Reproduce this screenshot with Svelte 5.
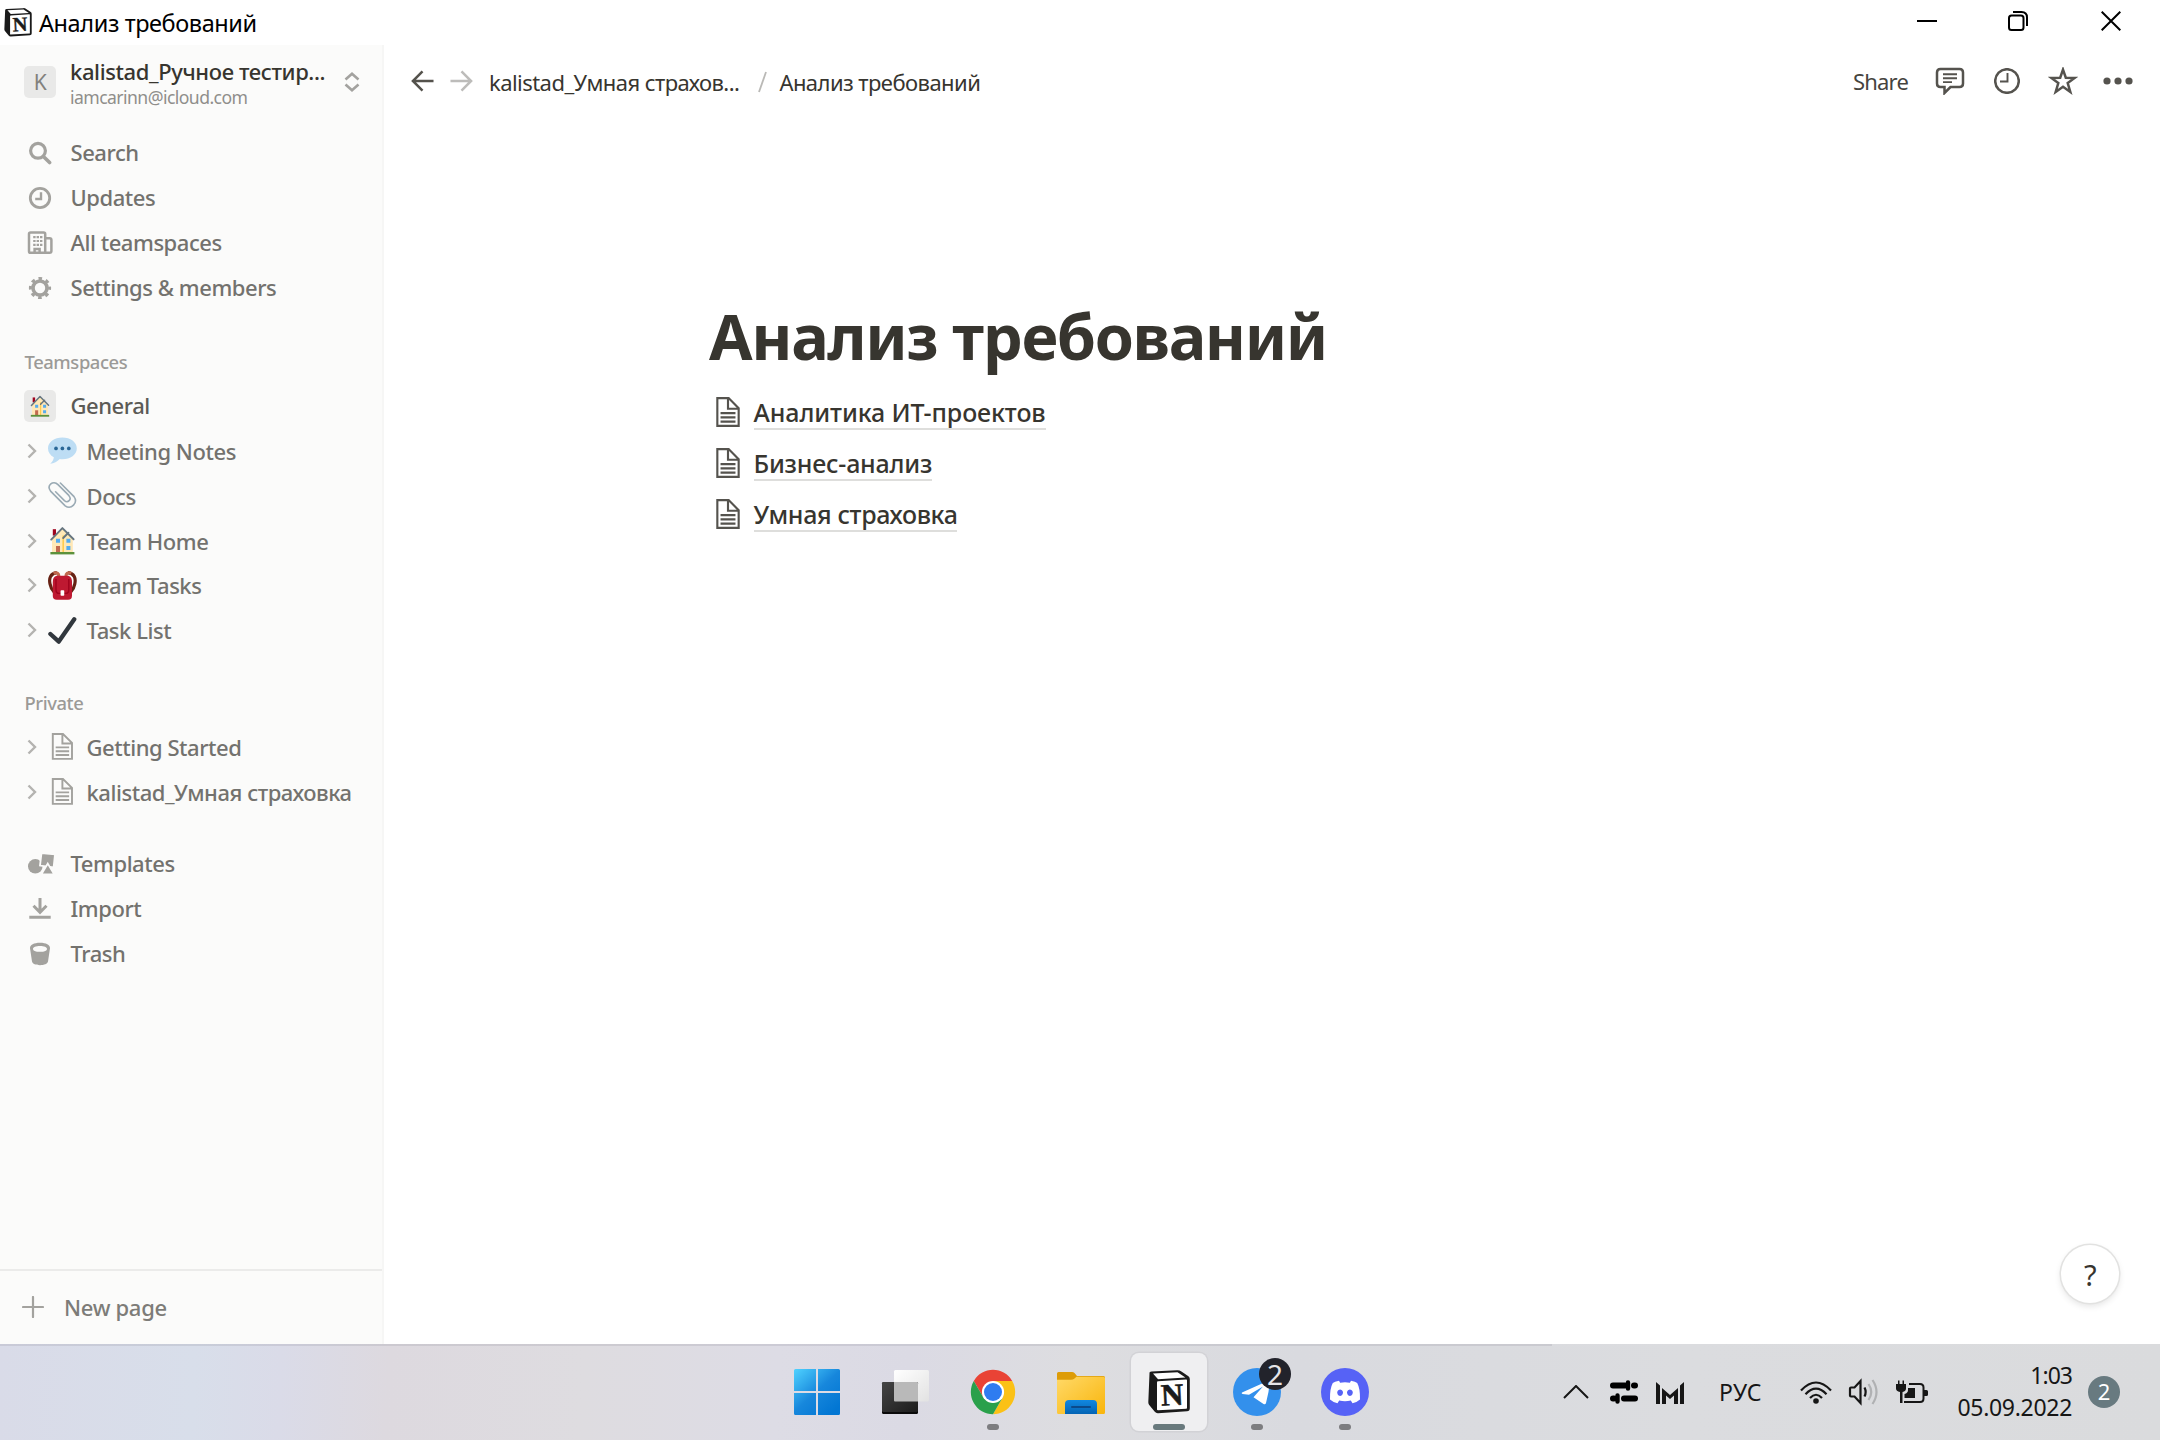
<script>
  const nav = [
    { icon: 'search', label: 'Search' },
    { icon: 'clock', label: 'Updates' },
    { icon: 'building', label: 'All teamspaces' },
    { icon: 'gear', label: 'Settings & members' }
  ];
  const teamPages = [
    { icon: 'bubble', label: 'Meeting Notes' },
    { icon: 'clip', label: 'Docs' },
    { icon: 'house', label: 'Team Home' },
    { icon: 'backpack', label: 'Team Tasks' },
    { icon: 'check', label: 'Task List' }
  ];
  const privatePages = [
    { icon: 'page', label: 'Getting Started' },
    { icon: 'page', label: 'kalistad_Умная страховка' }
  ];
  const tools = [
    { icon: 'templates', label: 'Templates' },
    { icon: 'import', label: 'Import' },
    { icon: 'trash', label: 'Trash' }
  ];
  const links = ['Аналитика ИТ-проектов', 'Бизнес-анализ', 'Умная страховка'];
  const apps = [
    { icon: 'windows' },
    { icon: 'taskview' },
    { icon: 'chrome', running: true },
    { icon: 'explorer' },
    { icon: 'notion', active: true },
    { icon: 'telegram', running: true, badge: '2' },
    { icon: 'discord', running: true }
  ];
</script>

{#snippet pageGlyph()}
  <svg class="page-glyph" viewBox="0 0 30 30"><path d="M16,1H4v28h22V11L16,1z M16,3.828L23.172,11H16V3.828z M24,27H6V3h8v10h10V27z M8,17h14v-2H8V17z M8,21h14v-2H8V21z M8,25h14v-2H8V25z" /></svg>
{/snippet}

{#snippet navIcon(name)}
  {#if name === 'search'}
    <svg class="nav-icon" viewBox="0 0 24 24"><g class="line"><circle cx="10" cy="9.8" r="7.4" stroke-width="3.2" /><path d="M15.4 15.4L21.6 21.6" stroke-width="3.6" stroke-linecap="round" /></g></svg>
  {:else if name === 'clock'}
    <svg class="nav-icon" viewBox="0 0 24 24"><g class="line"><circle cx="12" cy="12" r="9.7" stroke-width="2.8" /><path d="M13 6.2V13H7.2" stroke-width="2.4" /></g></svg>
  {:else if name === 'building'}
    <svg class="nav-icon wide" viewBox="0 0 26 24"><g class="line" stroke-width="2.5"><path d="M18.2 21.8H3.6Q2 21.8 2 20.2V3Q2 1.4 3.6 1.4H16.6Q18.2 1.4 18.2 3ZM18.2 7.2H22.6Q24.4 7.2 24.4 9V20Q24.4 21.8 22.6 21.8H18.2M7.6 21.8V18H12.6V21.8" /><path d="M6.2 6.2h2.4M9.6 6.2h2.4M13 6.2h2.4M6.2 10h2.4M9.6 10h2.4M13 10h2.4M6.2 13.8h2.4M9.6 13.8h2.4M13 13.8h2.4" stroke-width="2.2" /></g></svg>
  {:else if name === 'gear'}
    <svg class="nav-icon" viewBox="0 0 24 24"><g class="line"><circle cx="12" cy="12" r="7" stroke-width="3.6" /><circle cx="12" cy="12" r="9.600" stroke-width="3" stroke-dasharray="3.6 3.94" stroke-dashoffset="1.8" /></g></svg>
  {:else if name === 'templates'}
    <svg class="nav-icon xwide" viewBox="0 0 28 24"><circle cx="8.3" cy="14.3" r="7.3" /><path class="cut" d="M14.5 1L28 2.4 26.6 15.5 13 13.6Z" /><path class="cut" d="M20.8 11.6L27.2 22.4H14.4Z" /></svg>
  {:else if name === 'import'}
    <svg class="nav-icon" viewBox="0 0 24 24"><g class="line" stroke-width="3"><path d="M12 1V14.5M5.5 8.8L12 15.3 18.5 8.8M1.3 20.2H22.7" /></g></svg>
  {:else}
    <svg class="nav-icon" viewBox="0 0 24 24"><path fill-rule="evenodd" d="M12 .8C6 .8 1.8 3 2 6.2L4 19.6C4.4 22 8 23.2 12 23.2S19.6 22 20 19.6L22 6.2C22.2 3 18 .8 12 .8ZM12 4C16.2 4 19 5.2 19 6.9S16.2 9.8 12 9.8 5 8.6 5 6.9 7.8 4 12 4Z" /></svg>
  {/if}
{/snippet}

{#snippet house()}
  <svg class="emoji" viewBox="0 0 36 36">
    <path fill="#a0041e" d="M6 4h4v8H6z" />
    <path fill="#ffe8b6" d="M5 16L18 3l13 13v18H5z" />
    <path fill="#ffcc4d" d="M18 12h2v21h-2z" />
    <path fill="none" stroke="#66757f" stroke-width="2.4" stroke-linejoin="round" stroke-linecap="round" d="M4 17L18 2.6 32 16.6M19 15l6.5-6.5" />
    <path fill="#55acee" d="M10 16h5v5h-5zM23 16h5v5h-5zM23 25h5v5h-5z" />
    <path fill="#c1694f" d="M10 25h5v8h-5z" />
    <path fill="#5c913b" d="M3 32.5h30v3H3z" />
  </svg>
{/snippet}

{#snippet treeIcon(name)}
  {#if name === 'page'}
    {@render pageGlyph()}
  {:else if name === 'house'}
    {@render house()}
  {:else if name === 'bubble'}
    <svg class="emoji" viewBox="0 0 36 36"><path fill="#bdddf4" d="M18 2C8 2 0 7.8 0 15.5c0 4.600 2.900 8.600 7.300 11C7 29.500 5.500 32 2.800 34.800c4.700-.5 8.900-2.700 11.900-6.100 1.100.2 2.200.3 3.300.3 10 0 18-5.800 18-13.500S28 2 18 2z" /><g fill="#2a6797"><circle cx="10" cy="15.500" r="2.300" /><circle cx="18" cy="15.500" r="2.300" /><circle cx="26" cy="15.500" r="2.300" /></g></svg>
  {:else if name === 'clip'}
    <svg class="emoji" viewBox="0 0 36 36"><path fill="none" stroke="#9aaab4" stroke-width="2" stroke-linecap="round" d="M15.500 2.500L32.500 19.500C38 27 29 36.500 21.500 31L3.500 13C-2.500 5.500 6.500-1.500 12.500 4.500L26 18C30.500 23.500 24.500 28 20.500 24.500L9.500 13.500" /></svg>
  {:else if name === 'backpack'}
    <svg class="emoji" viewBox="0 0 36 36"><path fill="none" stroke="#662113" stroke-width="4" d="M11 2C3 3 1 9 2.500 16s3 8 5 10M25 2c8 1 10 7 8.500 14s-3 8-5 10" /><path fill="none" stroke="#c1694f" stroke-width="4" d="M7 3c4-2 7 0 6.500 5M29 3c-4-2-7 0-6.500 5" /><path fill="#be1931" d="M12 6h12c4 0 6 3 6 8v17c0 3-1.500 5-5 5H11c-3.500 0-5-2-5-5V14c0-5 2-8 6-8z" /><path fill="none" stroke="#a0041e" stroke-width="1.800" d="M10 10v13c0 4 2 5 4 5h8c2 0 4-1 4-5V10" /><rect fill="#fff" x="15.700" y="24" width="4.600" height="7" rx="1" /></svg>
  {:else}
    <svg class="emoji" viewBox="0 0 36 36"><path fill="none" stroke="#31373d" stroke-width="5.400" stroke-linecap="round" stroke-linejoin="round" d="M3 22.500L13.500 32 32.800 4" /></svg>
  {/if}
{/snippet}

{#snippet notionLogo()}
  <svg class="notion-logo" viewBox="0 0 42 44">
    <path fill="#1a1a1a" d="M1.500 3.500Q1 1.600 3.500 1.400L29 .2Q31.500 0 33.400 1.400L40.400 6.200Q41.800 7.400 41.800 9V38.500Q41.800 41 39 41.300L10 43.200Q8 43.300 6.800 41.800L1.200 35Q.3 33.800.3 32.200Z" />
    <path fill="#fff" d="M5 3.600L29.500 2.300 37.400 7.600 10 9.200Z" />
    <path fill="#fff" d="M9 12.200Q9 11.400 10 11.300L38.200 9.600Q39 9.600 39 10.400V37.800Q39 38.600 38.200 38.700L10 40.300Q9 40.300 9 39.500Z" />
    <text x="24.200" y="35.200" text-anchor="middle" transform="rotate(-3 24 25)">N</text>
  </svg>
{/snippet}

{#snippet treeRow(item)}
  <div class="tree-row">
    <svg class="caret" viewBox="0 0 10 16"><path d="M1.500 1.500L8 8 1.500 14.500" /></svg>
    <span class="slot">{@render treeIcon(item.icon)}</span>
    <span class="label">{item.label}</span>
  </div>
{/snippet}

<div class="screen">
  <header class="titlebar">
    {@render notionLogo()}
    <span class="window-title">Анализ требований</span>
    <div class="window-buttons">
      <svg viewBox="0 0 20 20"><path d="M0 10H20" /></svg>
      <svg viewBox="0 0 20 20"><rect x="1" y="4.500" width="14.500" height="14.500" rx="2.500" /><path d="M5 1H13.500Q19 1 19 6.500V15" /></svg>
      <svg viewBox="0 0 20 20"><path d="M.7.7L19.300 19.300M19.300.7L.7 19.300" /></svg>
    </div>
  </header>

  <div class="window">
    <aside class="sidebar">
      <div class="account">
        <span class="avatar">K</span>
        <div class="who">
          <strong>kalistad_Ручное тестир...</strong>
          <small>iamcarinn@icloud.com</small>
        </div>
        <svg class="updown" viewBox="0 0 16 20"><path d="M1.500 7.500L8 1.800 14.500 7.500M1.500 12.500L8 18.200 14.500 12.500" /></svg>
      </div>

      <nav>
        {#each nav as item}
          <div class="nav-row"><span class="slot">{@render navIcon(item.icon)}</span><span class="label">{item.label}</span></div>
        {/each}
      </nav>

      <div class="section first">Teamspaces</div>
      <div class="nav-row team"><span class="avatar">{@render house()}</span><span class="label">General</span></div>
      {#each teamPages as item}{@render treeRow(item)}{/each}

      <div class="section">Private</div>
      {#each privatePages as item}{@render treeRow(item)}{/each}

      <div class="tools">
        {#each tools as item}
          <div class="nav-row"><span class="slot">{@render navIcon(item.icon)}</span><span class="label">{item.label}</span></div>
        {/each}
      </div>

      <div class="new-page">
        <svg viewBox="0 0 22 22"><path d="M11 1V21M1 11H21" /></svg>
        <span class="label">New page</span>
      </div>
    </aside>

    <main>
      <div class="topbar">
        <svg class="arrow" viewBox="0 0 24 22"><path d="M23.500 11H2M12 1L2 11 12 21" /></svg>
        <svg class="arrow off" viewBox="0 0 24 22"><path d="M.5 11H22M12 1L22 11 12 21" /></svg>
        <span class="crumb parent">kalistad_Умная страхов...</span>
        <svg class="slash" viewBox="0 0 9 22"><path d="M8 1L1 21" /></svg>
        <span class="crumb">Анализ требований</span>
        <div class="actions">
          <span class="share">Share</span>
          <svg class="a-comment" viewBox="0 0 30 28"><path d="M5.500 2H24.500Q28 2 28 5.500V16.500Q28 20 24.500 20H15.500L9.500 26V20H5.500Q2 20 2 16.500V5.500Q2 2 5.500 2Z" /><path class="thin" d="M8 7.300H22M8 11.200H22M8 15.100H17" /></svg>
          <svg class="a-clock" viewBox="0 0 26 26"><circle cx="13" cy="13" r="11.800" /><path class="thin" d="M13.500 5V13.500H6" /></svg>
          <svg class="a-star" viewBox="0 0 28 28"><path d="M14 2.600L16.800 10.700 25.800 10.900 18.700 16.100 21.300 24.900 14 19.700 6.700 24.900 9.300 16.100 2.200 10.900 11.200 10.700Z" /></svg>
          <svg class="a-dots" viewBox="0 0 30 8"><circle cx="4" cy="4" r="3.600" /><circle cx="15" cy="4" r="3.600" /><circle cx="26" cy="4" r="3.600" /></svg>
        </div>
      </div>

      <article>
        <h1>Анализ требований</h1>
        {#each links as link}
          <div class="link">{@render pageGlyph()}<span>{link}</span></div>
        {/each}
      </article>

      <div class="help">?</div>
    </main>
  </div>

  <footer class="taskbar">
    <div class="apps">
      {#each apps as app}
        <div class="app" class:active={app.active} class:running={app.running}>
          {#if app.icon === 'windows'}
            <svg viewBox="0 0 48 48">
              <defs><linearGradient id="win" gradientUnits="userSpaceOnUse" x1="1" y1="1" x2="40" y2="44"><stop offset="0" stop-color="#4fd2ff" /><stop offset=".55" stop-color="#1787dc" /><stop offset="1" stop-color="#0276d3" /></linearGradient></defs>
              <path fill="url(#win)" d="M2.500 1H23V23H1V2.500Q1 1 2.500 1ZM25 1H45.500Q47 1 47 2.500V23H25ZM1 25H23V47H2.500Q1 47 1 45.500ZM25 25H47V45.500Q47 47 45.500 47H25Z" />
            </svg>
          {:else if app.icon === 'taskview'}
            <svg viewBox="0 0 48 48">
              <defs>
                <linearGradient id="tvDark" x1="0" y1="0" x2="1" y2="1"><stop offset="0" stop-color="#454545" /><stop offset="1" stop-color="#1c1c1c" /></linearGradient>
                <linearGradient id="tvLight" x1="0" y1="0" x2="1" y2="1"><stop offset="0" stop-color="#fff" /><stop offset="1" stop-color="#e2e2e2" /></linearGradient>
              </defs>
              <rect x="13" y="2" width="35" height="31.500" rx="1.500" fill="url(#tvLight)" />
              <rect x="1" y="14" width="36" height="32" rx="1.500" fill="#0a0a0a" />
              <rect x="1" y="14" width="36" height="30" rx="1.500" fill="url(#tvDark)" />
              <path fill="#b9b9b9" d="M13 14H36Q37 14 37 15V33.500H14Q13 33.500 13 32.500Z" />
            </svg>
          {:else if app.icon === 'chrome'}
            <svg viewBox="0 0 48 48">
              <path fill="#e94335" d="M4.800 12.900A22.200 22.200 0 0 1 43.200 12.900H24L14.400 29.500Z" />
              <path fill="#fbc116" d="M43.200 12.900A22.200 22.200 0 0 1 24 46.200L33.600 29.500 24 12.900Z" />
              <path fill="#2aa04b" d="M24 46.200A22.200 22.200 0 0 1 4.800 12.900L14.400 29.500 24 35.100 33.600 29.500Z" />
              <circle cx="24" cy="24" r="11.100" fill="#fff" /><circle cx="24" cy="24" r="9" fill="#2e7cf0" />
            </svg>
          {:else if app.icon === 'explorer'}
            <svg viewBox="0 0 48 48">
              <defs><linearGradient id="folder" x1="0" y1="0" x2="1" y2="1"><stop offset="0" stop-color="#ffd968" /><stop offset="1" stop-color="#f9b50b" /></linearGradient><linearGradient id="tray" x1="0" y1="0" x2="0" y2="1"><stop offset="0" stop-color="#1188e0" /><stop offset="1" stop-color="#0464b4" /></linearGradient></defs>
              <path fill="#dd9c08" d="M0 5.500Q0 4 1.500 4H15Q16.500 4 17.500 5L20 8H46.500Q48 8 48 9.500V20H0Z" />
              <path fill="url(#folder)" d="M0 11.700H14Q16 11.700 17.200 10.700L19.500 8.800H46.500Q48 8.800 48 10.300V44.500Q48 46 46.500 46H1.500Q0 46 0 44.500Z" />
              <path fill="url(#tray)" d="M8 46V36Q8 32 12 32H36Q40 32 40 36V46Z" /><rect x="14" y="38" width="20" height="2" rx="1" fill="#0b4a8a" />
            </svg>
          {:else if app.icon === 'notion'}
            {@render notionLogo()}
          {:else if app.icon === 'telegram'}
            <svg viewBox="0 0 48 48"><circle cx="24" cy="24" r="24" fill="#3390ec" /><path fill="#fff" d="M9 24.600L37 12Q36 24 33 35Q32.400 37 30.500 36L20.500 29.300 30 18.500 16 26.800 9.500 25.900Q8 25.300 9 24.600Z" /></svg>
            <span class="badge">2</span>
          {:else}
            <svg viewBox="0 0 48 48"><circle cx="24" cy="24" r="24" fill="#5662f6" /><path fill="#fff" fill-rule="evenodd" d="M18 12.700Q13.500 13.600 11.800 14.900 8.700 20.500 9 31.500 12 34.300 16.500 35.200L18.200 32.400Q24 34 29.800 32.400L31.500 35.200Q36 34.300 39 31.500 39.300 20.500 36.200 14.900 34.500 13.600 30 12.700L28.900 14.700Q24 14 19.100 14.700ZM19.100 21.500A2.900 3.200 0 1 0 19.110 21.500ZM28.900 21.500A2.900 3.200 0 1 0 28.910 21.500Z" /></svg>
          {/if}
        </div>
      {/each}
    </div>

    <div class="tray">
      <svg class="t-up" viewBox="0 0 26 14"><path d="M1 13L13 1 25 13" /></svg>
      <svg class="t-sliders" viewBox="0 0 28 24"><g stroke-linecap="round"><path stroke-width="6" d="M3 5.500H15M25 5.500h-1" /><path stroke-width="6" d="M3 18.500h1M14 18.500H25" /><path stroke-width="4.400" d="M18 2.400V8.600M7.500 15.400V21.600" /></g></svg>
      <svg class="t-m" viewBox="0 0 28 22"><path d="M0 0L4 3.500V22H0ZM28 0L24 3.500V22H28ZM6 6L14 13 22 6V22H18V13.500L14 17 10 13.500V22H6Z" /></svg>
      <span class="lang">РУС</span>
      <svg class="t-wifi" viewBox="0 0 32 23"><path d="M1 9.500Q16-6.500 31 9.500M5.500 13.200Q16 2 26.500 13.200M10 17Q16 10.500 22 17" /><circle cx="16" cy="20" r="2.800" /></svg>
      <svg class="t-sound" viewBox="0 0 32 28"><path d="M2 10.500Q2 9.500 3 9.500H6.500L12.500 3V25L6.500 18.500H3Q2 18.500 2 17.500ZM16.500 9.500Q18.800 14 16.500 18.500" /><path class="faint" d="M20.500 6Q26 14 20.500 22M24.500 2Q32.500 14 24.500 26" /></svg>
      <svg class="t-battery" viewBox="0 0 32 26"><path fill="none" stroke="#161616" stroke-width="2" d="M13 5H24Q27.500 5 27.500 8.500V19.500Q27.500 23 24 23H8" /><path d="M12 9H19V19H8.500V15Q12 14 12 11ZM28 11H30.500Q32 11 32 12.500V15.500Q32 17 30.500 17H28ZM0 5H2V1.500H3.500V5H6.500V1.500H8V5H10V9.500Q10 12 6.500 13V24H4V13Q0 12 0 9.500Z" /></svg>
      <div class="clock"><span class="time">1:03</span><span>05.09.2022</span></div>
      <span class="count">2</span>
    </div>
  </footer>
</div>

<style>
  :global(body) { margin: 0; background: #fff; }
  .screen {
    width: 2160px; height: 1440px; overflow: hidden;
    display: flex; flex-direction: column;
    background: #fff; color: #37352f;
    font-family: 'Noto Sans', 'Open Sans', sans-serif;
    font-size: 22px; letter-spacing: -0.45px; white-space: nowrap;
  }
  svg { display: block; flex: none; }

  .titlebar { height: 45px; flex: none; display: flex; align-items: center; padding: 0 39px 0 4px; box-sizing: border-box; }
  .notion-logo { width: 28px; height: 29px; }
  .titlebar .notion-logo { margin-bottom: 1px; }
  .notion-logo text { font: 700 31px 'Liberation Serif', serif; fill: #1a1a1a; stroke: #1a1a1a; stroke-width: 0.6px; letter-spacing: 0; }
  .window-title { margin-left: 7px; font-size: 23.5px; letter-spacing: -0.4px; color: #000; padding-top: 1px; }
  .window-buttons { margin-left: auto; display: flex; gap: 71px; padding-bottom: 3px; }
  .window-buttons svg { width: 20px; height: 20px; fill: none; stroke: #000; stroke-width: 2; }
  .window-buttons svg:last-child { margin-left: 2px; }

  .window { height: 1299px; flex: none; display: flex; }
  .sidebar {
    width: 384px; box-sizing: border-box; background: #fbfbfa; border-right: 2px solid #f6f6f5;
    display: flex; flex-direction: column; color: #73726e; font-weight: 500;
  }
  .account { height: 74px; flex: none; display: flex; align-items: center; padding: 0 22px 0 24px; margin-bottom: 11.8px; }
  .avatar {
    width: 32px; height: 32px; flex: none; border-radius: 5px; background: #e9e9e8;
    display: flex; align-items: center; justify-content: center; font-size: 21px; color: #82817d; font-weight: 400;
  }
  .who { flex: 1; margin-left: 14px; display: flex; flex-direction: column; padding-top: 2px; }
  .who strong { font-size: 22px; line-height: 28px; font-weight: 500; color: #37352f; letter-spacing: -0.38px; }
  .who small { font-size: 17.6px; line-height: 24px; font-weight: 400; color: #8f8e8b; letter-spacing: -0.56px; }
  .updown { width: 16px; height: 20px; fill: none; stroke: #a3a29f; stroke-width: 2.6; }

  .nav-row { height: 44.8px; flex: none; display: flex; align-items: center; padding-left: 24px; }
  .nav-row .slot { width: 32px; display: flex; justify-content: center; }
  .nav-row .label { margin-left: 14.5px; padding-bottom: 2px; }
  .team .label { color: #5b5a56; }
  .nav-icon { width: 24px; height: 24px; fill: #a3a29e; }
  .nav-icon.wide { width: 26px; }
  .nav-icon.xwide { width: 28px; margin-left: 1px; }
  .nav-icon .line { fill: none; stroke: #a3a29e; }
  .nav-icon .cut { stroke: #fbfbfa; stroke-width: 1.8; }

  .section { height: 71.4px; flex: none; display: flex; align-items: flex-end; padding-left: 24.5px; box-sizing: border-box; padding-bottom: 2px; font-size: 18.4px; line-height: 38px; letter-spacing: -0.42px; color: #9b9a97; }
  .section.first { height: 73.6px; padding-bottom: 3px; }

  .tree-row { height: 44.9px; flex: none; display: flex; align-items: center; padding-left: 27px; }
  .tree-row .slot { width: 30px; margin-left: 10.5px; display: flex; justify-content: center; }
  .tree-row .label { margin-left: 9px; }
  .caret { width: 10px; height: 16px; fill: none; stroke: #b4b3b0; stroke-width: 2.4; }
  .emoji { width: 28.8px; height: 28.8px; }
  .avatar .emoji { width: 22px; height: 22px; }
  .page-glyph { width: 28.8px; height: 28.8px; fill: #a3a29e; }

  .tools { margin-top: 28px; }
  .new-page { margin-top: auto; height: 75px; box-sizing: border-box; border-top: 2px solid #ebebea; display: flex; align-items: center; padding: 0 0 2px 22px; letter-spacing: -0.3px; color: #7d7c78; }
  .new-page svg { width: 22px; height: 22px; fill: none; stroke: #a3a29e; stroke-width: 2.2; stroke-linecap: round; }
  .new-page .label { margin-left: 20px; }

  main { flex: 1; position: relative; }
  .topbar { height: 72px; box-sizing: border-box; display: flex; align-items: center; padding: 0 27px 1px; color: #37352f; }
  .arrow { width: 23px; height: 22px; fill: none; stroke: #54524c; stroke-width: 2.6; }
  .arrow.off { stroke: #bdbcba; margin-left: 16px; }
  .crumb { letter-spacing: -0.55px; padding-top: 2px; }
  .parent { margin-left: 16px; }
  .slash { width: 9px; height: 22px; margin: 3px 12px 0 19px; fill: none; stroke: #bab9b6; stroke-width: 1.8; }
  .actions { margin-left: auto; display: flex; align-items: center; }
  .actions svg { fill: none; stroke: #55534e; stroke-width: 2.5; }
  .actions .thin { stroke-width: 1.9; }
  .share { letter-spacing: -0.8px; color: #45433e; margin-right: 27px; }
  .a-comment { width: 30px; height: 28px; }
  .a-clock { width: 26px; height: 26px; margin-left: 29px; }
  .a-star { width: 30px; height: 28px; margin-left: 28px; }
  .actions .a-dots { width: 30px; height: 8px; margin-left: 25px; fill: #55534e; stroke: none; }

  article { padding: 176px 0 0 325px; }
  h1 { margin: 0 0 8px; font-size: 63px; line-height: 86px; font-weight: 700; letter-spacing: -1.38px; color: #37352f; }
  .link { height: 51.2px; display: flex; align-items: center; padding-left: 3px; }
  .link .page-glyph { width: 32px; height: 32px; margin-bottom: 2px; fill: #55534e; }
  .link span { margin-left: 9.5px; font-size: 25px; line-height: 32px; font-weight: 500; letter-spacing: -0.22px; border-bottom: 2px solid #dededc; }
  .link:nth-of-type(1) span { letter-spacing: -0.1px; }
  .link:nth-of-type(3) span { letter-spacing: -0.36px; }
  .help {
    position: absolute; right: 41px; bottom: 41px; width: 58px; height: 58px; border-radius: 50%;
    background: #fff; box-shadow: 0 0 0 1.5px #e2e2e1, 0 3px 7px rgba(15, 15, 15, 0.12);
    display: flex; align-items: center; justify-content: center; font-size: 29px; color: #37352f;
  }

  .taskbar {
    flex: 1; box-sizing: border-box; display: flex; align-items: center; justify-content: flex-end; position: relative;
    background: linear-gradient(92deg, #d9dbe8 0, #d8deea 9%, #dadbe8 13%, #ddd9df 18%, #dedce0 27%, #dddce5 36%, #dbdae4 42%, #dddde0 50%, #d9dadf 60%, #dbdcdf 78%, #dadbdd 100%);
  }
  .taskbar::before { content: ''; position: absolute; left: 0; top: 0; width: 1552px; height: 2px; background: rgba(120, 120, 130, 0.16); }
  .apps { display: flex; gap: 12px; margin-right: 180px; }
  .app {
    width: 76px; height: 78px; box-sizing: border-box; position: relative;
    display: flex; align-items: center; justify-content: center; border-radius: 8px;
  }
  .app > svg { width: 48px; height: 48px; }
  .app > .notion-logo { width: 42px; height: 44px; }
  .active { background: #efeff1; box-shadow: 0 0 0 1.5px #d2d2d6; }
  .running::after, .active::after { content: ''; position: absolute; bottom: 1px; width: 12px; height: 6px; border-radius: 3px; background: #7d7d80; }
  .active::after { width: 32px; background: #68797d; }
  .badge {
    position: absolute; left: 40px; top: 5px; width: 32px; height: 32px; border-radius: 50%; background: #22232b;
    color: #e4e4e8; font-size: 28px; line-height: 32px; text-align: center; letter-spacing: 0;
  }

  .tray { display: flex; align-items: center; padding-right: 40px; color: #161616; }
  .tray svg { fill: #161616; }
  .tray .t-up { width: 26px; height: 14px; fill: none; stroke: #161616; stroke-width: 2; }
  .tray .t-sliders { width: 28px; height: 24px; margin-left: 21px; stroke: #000; }
  .t-m { width: 28px; height: 22px; margin-left: 18px; padding-top: 2px; }
  .lang { margin-left: 35px; width: 44px; font-size: 23px; letter-spacing: 0.5px; }
  .tray .t-wifi { width: 32px; height: 23px; margin-left: 37px; }
  .t-wifi path { fill: none; stroke: #161616; stroke-width: 2.2; }
  .tray .t-sound { width: 32px; height: 28px; margin-left: 16px; fill: none; stroke: #161616; stroke-width: 2.2; }
  .t-sound .faint { stroke: #b0b1b3; }
  .t-battery { width: 32px; height: 26px; margin-left: 16px; }
  .clock { width: 144px; display: flex; flex-direction: column; align-items: flex-end; font-size: 23px; line-height: 32px; letter-spacing: -0.3px; padding-bottom: 2px; }
  .time { letter-spacing: -1px; }
  .count { margin-left: 16px; width: 32px; height: 32px; border-radius: 50%; background: #687a80; color: #fff; text-align: center; font-size: 22px; line-height: 31px; letter-spacing: 0; }
</style>
